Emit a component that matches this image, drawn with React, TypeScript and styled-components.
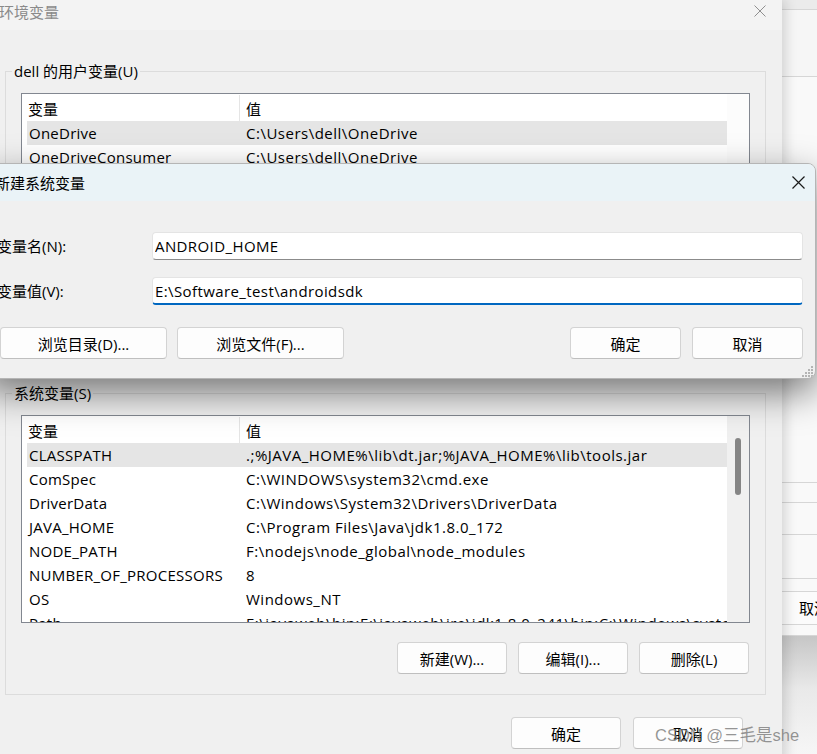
import React from "react";
import styled, { createGlobalStyle } from "styled-components";

const GlobalStyle = createGlobalStyle`
  html, body { margin: 0; padding: 0; }
  body {
    width: 817px; height: 754px; overflow: hidden; background: #f7f7f7;
    font-family: "Open Sans", "Noto Sans CJK SC", sans-serif; font-size: 15px; color: #000;
  }
  #root { width: 817px; height: 754px; }
  * { box-sizing: border-box; }
`;

const Screen = styled.div`
  position: relative;
  width: 817px;
  height: 754px;
  overflow: hidden;
  display: flex;
`;

const EnvDialog = styled.section`
  position: relative;
  z-index: 1;
  flex: 0 0 798px;
  margin-left: -16px;
  height: 780px;
  background: #f0f0f0;
  box-shadow: 3px 0 12px rgba(0, 0, 0, 0.16);
  display: flex;
  flex-direction: column;
`;

const EnvTitleBar = styled.div`
  height: 30px;
  background: #f3f3f3;
  display: flex;
  align-items: flex-start;
  padding-left: 15px;
`;

const TitleText = styled.div<{ $inactive?: boolean }>`
  flex: 1;
  line-height: ${(p) => (p.$inactive ? "24px" : "20px")};
  color: ${(p) => (p.$inactive ? "#8a8a8a" : "#000")};
  white-space: nowrap;
`;

const CloseButton = styled.div<{ $w: number; $h: number }>`
  width: ${(p) => p.$w}px;
  height: ${(p) => p.$h}px;
  display: flex;
  align-items: center;
  justify-content: center;
`;

const EnvBody = styled.div`
  padding: 0 16px 0 21px;
  display: flex;
  flex-direction: column;
`;

const GroupBox = styled.fieldset<{ $first?: boolean }>`
  margin: ${(p) => (p.$first ? "31px" : "10px")} 0 0 0;
  padding: 0;
  min-width: 0;
  border: 1px solid #dcdcdc;
`;

const Legend = styled.legend`
  margin-left: 6px;
  padding: 0 2px;
  line-height: 20px;
  font-size: 15px;
`;

const GroupInner = styled.div`
  padding: 12px 15px 20px 15px;
  display: flex;
  flex-direction: column;
`;

const ListBox = styled.div`
  height: 208px;
  border: 1px solid #828790;
  background: #fff;
  display: flex;
`;

const ListMain = styled.div`
  flex: 1;
  min-width: 0;
  padding: 1px 0 0 5px;
  overflow: hidden;
`;

const HeaderRow = styled.div`
  display: grid;
  grid-template-columns: 213px 1fr;
  height: 26px;
`;

const HeaderCell = styled.div<{ $first?: boolean }>`
  padding: 2px 0 0 ${(p) => (p.$first ? 1 : 6)}px;
  line-height: 24px;
  border-right: ${(p) => (p.$first ? "1px solid #e5e5e5" : "none")};
  white-space: nowrap;
`;

const DataRow = styled.div<{ $selected?: boolean }>`
  display: grid;
  grid-template-columns: 213px 1fr;
  height: 24px;
  background: ${(p) => (p.$selected ? "#e5e5e5" : "transparent")};
`;

const Cell = styled.div<{ $first?: boolean }>`
  padding-left: ${(p) => (p.$first ? 2 : 6)}px;
  line-height: 24px;
  letter-spacing: ${(p) => (p.$first ? 0.25 : 0.5)}px;
  white-space: nowrap;
  overflow: hidden;
`;

const ScrollTrack = styled.div<{ $visible?: boolean }>`
  flex: 0 0 22px;
  background: ${(p) => (p.$visible ? "#f0f0f0" : "#fcfcfc")};
  padding: 22px 0 0 8px;
`;

const ScrollThumb = styled.div`
  width: 6px;
  height: 57px;
  border-radius: 3px;
  background: #858585;
`;

const ButtonRow = styled.div<{ $gap: number; $top: number; $right: number }>`
  display: flex;
  justify-content: flex-end;
  gap: ${(p) => p.$gap}px;
  margin-top: ${(p) => p.$top}px;
  padding-right: ${(p) => p.$right}px;
`;

const Button = styled.button<{ $w: number }>`
  width: ${(p) => p.$w}px;
  height: 32px;
  padding: 0;
  background: #fdfdfd;
  border: 1px solid #d3d3d3;
  border-bottom-color: #bfbfbf;
  border-radius: 4px;
  font-family: inherit;
  font-size: 15px;
  color: #000;
  display: flex;
  align-items: center;
  justify-content: center;
  white-space: nowrap;
`;

const SideWindow = styled.div`
  flex: 1;
  display: flex;
  flex-direction: column;
  background: #f8f8f8;
`;

const SideBand = styled.div<{ $h: number; $bg?: string }>`
  flex: 0 0 ${(p) => p.$h}px;
  background: ${(p) => p.$bg || "#f9f9f9"};
  border-bottom: 1px solid #d6d6d6;
  padding-left: 17px;
  line-height: ${(p) => p.$h - 1}px;
  white-space: nowrap;
  overflow: hidden;
`;

const SideShade = styled.div`
  flex: 1;
  background: linear-gradient(#c6c6c6, #e9e9e9 45%, #f6f6f6);
`;

const NewVarDialog = styled.section`
  position: absolute;
  z-index: 2;
  top: 163px;
  left: -16px;
  width: 832px;
  height: 216px;
  border: 1px solid #b5b5b5;
  border-radius: 8px;
  overflow: hidden;
  background: #f0f0f0;
  box-shadow: 0 14px 36px rgba(0, 0, 0, 0.5);
  display: flex;
  flex-direction: column;
`;

const NewTitleBar = styled.div`
  height: 37px;
  flex: 0 0 37px;
  background: #eaf3f7;
  display: flex;
  align-items: center;
  padding-left: 10px;
`;

const NewBody = styled.div`
  flex: 1;
  padding: 31px 12px 0 15px;
  display: flex;
  flex-direction: column;
`;

const FieldRow = styled.div<{ $bottom: number }>`
  display: grid;
  grid-template-columns: 155px 1fr;
  align-items: center;
  margin-left: -3px;
  margin-bottom: ${(p) => p.$bottom}px;
`;

const FieldLabel = styled.div`
  line-height: 20px;
  white-space: nowrap;
`;

const TextInput = styled.input<{ $focused?: boolean }>`
  height: 28px;
  width: 100%;
  border: 1px solid #e4e4e4;
  border-bottom: ${(p) => (p.$focused ? "2px solid #0067c0" : "1px solid #8b8b8b")};
  border-radius: 4px;
  background: #fff;
  padding: 0 0 0 2px;
  font-family: inherit;
  font-size: 15px;
  letter-spacing: 0.4px;
  color: #000;
  outline: none;
`;

const DialogButtons = styled.div`
  display: flex;
  align-items: center;
`;

const ButtonGroup = styled.div<{ $gap: number }>`
  display: flex;
  gap: ${(p) => p.$gap}px;
`;

const Spacer = styled.div`
  flex: 1;
`;

const Grip = styled.svg`
  position: absolute;
  right: 1px;
  bottom: 1px;
`;

const Watermark = styled.div`
  position: absolute;
  z-index: 3;
  left: 655px;
  top: 724px;
  line-height: 22px;
  font-family: "Liberation Sans", "Noto Sans CJK SC", sans-serif;
  font-size: 16.5px;
  color: rgba(120, 120, 120, 0.78);
  white-space: nowrap;
`;

const XIcon = ({ size, color, stroke }: { size: number; color: string; stroke: number }) => (
  <svg width={size} height={size} viewBox={`0 0 ${size} ${size}`}>
    <path d={`M0.5 0.5 L${size - 0.5} ${size - 0.5} M${size - 0.5} 0.5 L0.5 ${size - 0.5}`} stroke={color} strokeWidth={stroke} fill="none" />
  </svg>
);

type Row = [string, string];

const userRows: Row[] = [
  ["OneDrive", "C:\\Users\\dell\\OneDrive"],
  ["OneDriveConsumer", "C:\\Users\\dell\\OneDrive"],
  ["Path", "C:\\Users\\dell\\AppData\\Local\\Microsoft\\WindowsApps;"],
  ["TEMP", "C:\\Users\\dell\\AppData\\Local\\Temp"],
  ["TMP", "C:\\Users\\dell\\AppData\\Local\\Temp"],
];

const systemRows: Row[] = [
  ["CLASSPATH", ".;%JAVA_HOME%\\lib\\dt.jar;%JAVA_HOME%\\lib\\tools.jar"],
  ["ComSpec", "C:\\WINDOWS\\system32\\cmd.exe"],
  ["DriverData", "C:\\Windows\\System32\\Drivers\\DriverData"],
  ["JAVA_HOME", "C:\\Program Files\\Java\\jdk1.8.0_172"],
  ["NODE_PATH", "F:\\nodejs\\node_global\\node_modules"],
  ["NUMBER_OF_PROCESSORS", "8"],
  ["OS", "Windows_NT"],
  ["Path", "E:\\javaweb\\bin;E:\\javaweb\\jre\\jdk1.8.0_241\\bin;C:\\Windows\\system32"],
];

const VarList = ({ rows, scroll }: { rows: Row[]; scroll?: boolean }) => (
  <ListBox>
    <ListMain>
      <HeaderRow>
        <HeaderCell $first>变量</HeaderCell>
        <HeaderCell>值</HeaderCell>
      </HeaderRow>
      {rows.map(([k, v], i) => (
        <DataRow key={k + i} $selected={i === 0}>
          <Cell $first>{k}</Cell>
          <Cell>{v}</Cell>
        </DataRow>
      ))}
    </ListMain>
    <ScrollTrack $visible={scroll}>{scroll && <ScrollThumb />}</ScrollTrack>
  </ListBox>
);

export default function App() {
  return (
    <>
      <GlobalStyle />
      <Screen>
        <EnvDialog>
          <EnvTitleBar>
            <TitleText $inactive>环境变量</TitleText>
            <CloseButton $w={44} $h={22}>
              <XIcon size={12} color="#8f8f8f" stroke={1} />
            </CloseButton>
          </EnvTitleBar>
          <EnvBody>
            <GroupBox $first>
              <Legend>dell 的用户变量(U)</Legend>
              <GroupInner>
                <VarList rows={userRows} />
                <ButtonRow $gap={11} $top={19} $right={1}>
                  <Button $w={110}>新建(N)...</Button>
                  <Button $w={110}>编辑(E)...</Button>
                  <Button $w={110}>删除(D)</Button>
                </ButtonRow>
              </GroupInner>
            </GroupBox>
            <GroupBox>
              <Legend>系统变量(S)</Legend>
              <GroupInner>
                <VarList rows={systemRows} scroll />
                <ButtonRow $gap={11} $top={19} $right={1}>
                  <Button $w={110}>新建(W)...</Button>
                  <Button $w={110}>编辑(I)...</Button>
                  <Button $w={110}>删除(L)</Button>
                </ButtonRow>
              </GroupInner>
            </GroupBox>
            <ButtonRow $gap={12} $top={22} $right={23}>
              <Button $w={110}>确定</Button>
              <Button $w={110}>取消</Button>
            </ButtonRow>
          </EnvBody>
        </EnvDialog>

        <SideWindow>
          <SideBand $h={10} $bg="#ebebeb" />
          <SideBand $h={67} $bg="#f6f6f6" />
          <SideBand $h={406} />
          <SideBand $h={20} />
          <SideBand $h={32} />
          <SideBand $h={44} />
          <SideBand $h={13} />
          <SideBand $h={33} $bg="#fbfbfb">取消</SideBand>
          <SideBand $h={11} />
          <SideShade />
        </SideWindow>

        <NewVarDialog>
          <NewTitleBar>
            <TitleText>新建系统变量</TitleText>
            <CloseButton $w={34} $h={37}>
              <XIcon size={13} color="#1a1a1a" stroke={1.2} />
            </CloseButton>
          </NewTitleBar>
          <NewBody>
            <FieldRow $bottom={17}>
              <FieldLabel>变量名(N):</FieldLabel>
              <TextInput readOnly value="ANDROID_HOME" />
            </FieldRow>
            <FieldRow $bottom={22}>
              <FieldLabel>变量值(V):</FieldLabel>
              <TextInput readOnly $focused value="E:\Software_test\androidsdk" />
            </FieldRow>
            <DialogButtons>
              <ButtonGroup $gap={10}>
                <Button $w={167}>浏览目录(D)...</Button>
                <Button $w={167}>浏览文件(F)...</Button>
              </ButtonGroup>
              <Spacer />
              <ButtonGroup $gap={11}>
                <Button $w={111}>确定</Button>
                <Button $w={111}>取消</Button>
              </ButtonGroup>
            </DialogButtons>
          </NewBody>
          <Grip width="12" height="12" viewBox="0 0 12 12">
            <g fill="#b4b4b4">
              <rect x="9" y="1" width="2" height="2" />
              <rect x="6" y="4" width="2" height="2" />
              <rect x="9" y="4" width="2" height="2" />
              <rect x="3" y="7" width="2" height="2" />
              <rect x="6" y="7" width="2" height="2" />
              <rect x="9" y="7" width="2" height="2" />
              <rect x="0" y="10" width="2" height="2" />
              <rect x="3" y="10" width="2" height="2" />
              <rect x="6" y="10" width="2" height="2" />
              <rect x="9" y="10" width="2" height="2" />
            </g>
          </Grip>
        </NewVarDialog>

        <Watermark>CSDN @三毛是she</Watermark>
      </Screen>
    </>
  );
}
